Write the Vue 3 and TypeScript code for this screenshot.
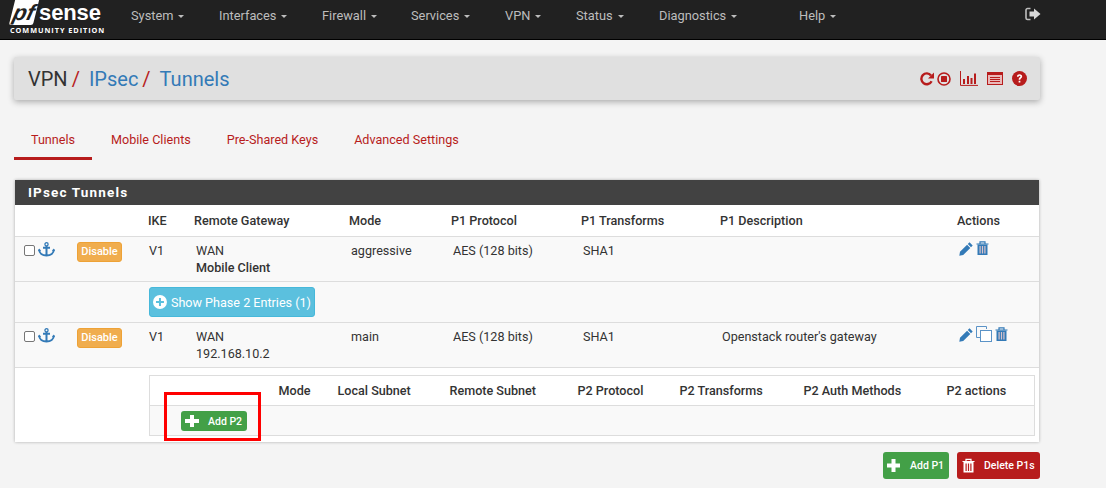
<script setup lang="ts">
const navItems: string[] = ['System', 'Interfaces', 'Firewall', 'Services', 'VPN', 'Status', 'Diagnostics', 'Help']
const tabs: string[] = ['Tunnels', 'Mobile Clients', 'Pre-Shared Keys', 'Advanced Settings']
const headers: string[] = ['', '', 'IKE', 'Remote Gateway', 'Mode', 'P1 Protocol', 'P1 Transforms', 'P1 Description', 'Actions']
const subHeaders: string[] = ['', 'Mode', 'Local Subnet', 'Remote Subnet', 'P2 Protocol', 'P2 Transforms', 'P2 Auth Methods', 'P2 actions']
</script>

<template>
  <div class="page">
    <header class="navbar">
      <div class="brand">
        <div class="logo-top"><span class="pf"><i>pf</i></span><span class="sense">sense</span></div>
        <div class="edition">COMMUNITY EDITION</div>
      </div>
      <nav class="menu">
        <span v-for="item in navItems" :key="item" class="menu-item" :class="'m-' + item.toLowerCase()">{{ item }}<b class="caret"></b></span>
      </nav>
      <svg class="logout" viewBox="0 0 16 14" width="16" height="14">
        <path d="M5.500 1.500H2.600A1.600 1.600 0 0 0 1 3.100v7.800a1.600 1.600 0 0 0 1.600 1.600h2.900" fill="none" stroke="#bdbdbd" stroke-width="1.600" />
        <path d="M9 1.500 15.500 7 9 12.500V9.500H4.500v-5H9z" fill="#d8d8d8" />
      </svg>
    </header>

    <main class="container">
      <div class="crumbs">
        <h1><span class="dark">VPN</span><em>/</em><a>IPsec</a><em>/</em><a>Tunnels</a></h1>
        <div class="crumb-icons">
          <svg width="14" height="14" viewBox="0 0 14 14"><path d="M11.600 9.200A5.400 5.400 0 1 1 11 3.400" fill="none" stroke="#b71c1c" stroke-width="2.400" /><path d="M14 .4v6H8z" fill="#b71c1c" /></svg>
          <svg width="14" height="14" viewBox="0 0 14 14"><circle cx="7" cy="7" r="6" fill="none" stroke="#b71c1c" stroke-width="1.600" /><rect x="4" y="4" width="6" height="6" rx=".6" fill="#b71c1c" /></svg>
          <svg class="ml" width="18" height="15" viewBox="0 0 18 15"><path d="M.5 0v14.400H18" fill="none" stroke="#b71c1c" /><path d="M3 8h2v5H3zM7 5h2v8H7zM10.500 7h2v6h-2zM14 2.500h2V13h-2z" fill="#b71c1c" /></svg>
          <svg class="ml" width="16" height="13" viewBox="0 0 16 13"><rect x=".5" y=".5" width="15" height="12" fill="#e9b8b8" stroke="#b71c1c" /><path d="M0 0h16v3H0zM3 5h10v1H3zM3 7h10v1H3zM3 9h10v1H3z" fill="#b71c1c" /></svg>
          <svg class="ml" width="15" height="15" viewBox="0 0 14 14"><circle cx="7" cy="7" r="7" fill="#b71c1c" /><path d="M4.600 5.300C4.700 3.900 5.700 3.100 7.100 3.100c1.400 0 2.400.9 2.400 2 0 1.700-1.800 1.700-1.800 3H6.200c0-2 1.700-2 1.700-2.900 0-.4-.3-.7-.8-.7-.5 0-.9.300-1 .9zM6.200 9h1.600v1.800H6.200z" fill="#fff" /></svg>
        </div>
      </div>

      <ul class="tabs">
        <li v-for="(tab, i) in tabs" :key="tab" :class="{ active: i === 0 }">{{ tab }}</li>
      </ul>

      <section class="panel">
        <h2>IPsec Tunnels</h2>
        <table class="main">
          <colgroup>
            <col style="width: 57px" /><col style="width: 72px" /><col style="width: 46px" /><col style="width: 155px" />
            <col style="width: 102px" /><col style="width: 130px" /><col style="width: 139px" /><col style="width: 237px" /><col />
          </colgroup>
          <thead>
            <tr><th v-for="(h, i) in headers" :key="i">{{ h }}</th></tr>
          </thead>
          <tbody>
            <tr class="row">
              <td class="first"><span class="check"></span><svg class="anchor" width="17" height="15" viewBox="0 0 17 15"><path d="M8.500 4v10M5 5.800h7M1.200 7.500c0 3.800 3.200 6 7.300 6s7.300-2.200 7.300-6" fill="none" stroke="#337ab7" stroke-width="2" /><path d="M0 9l1.200-2.500L3 9zM14 9l1.800-2.500L17 9z" fill="#337ab7" /><circle cx="8.500" cy="2.300" r="1.600" fill="none" stroke="#337ab7" stroke-width="1.300" /></svg></td>
              <td class="btn-cell"><span class="disable">Disable</span></td>
              <td class="ike">V1</td>
              <td>WAN<br /><strong>Mobile Client</strong></td>
              <td>aggressive</td>
              <td>AES (128 bits)</td>
              <td>SHA1</td>
              <td></td>
              <td class="acts">
                <svg width="14" height="14" viewBox="0 0 14 14"><path d="M10.500 0.300 13.700 3.500 12 5.200 8.800 2zM8.100 2.700 11.300 5.900 4.200 13 .3 13.700 1 9.800z" fill="#337ab7" /></svg>
                <svg class="trash" width="13" height="14" viewBox="0 0 13 14"><path d="M4 2.500V.8h5v1.700M.5 3h12" fill="none" stroke="#337ab7" stroke-width="1.200" /><path d="M1.500 3.500h10V14h-10z" fill="#337ab7" /><path d="M3.500 5h1.200v7.500H3.500zM5.900 5h1.200v7.500H5.900zM8.300 5h1.200v7.500H8.300z" fill="#d9c3cb" /></svg>
              </td>
            </tr>
            <tr class="row">
              <td colspan="2"></td>
              <td colspan="7" class="show-cell"><span class="show"><svg width="14" height="14" viewBox="0 0 14 14"><circle cx="7" cy="7" r="7" fill="#fff" /><path d="M6 3h2v3h3v2H8v3H6V8H3V6h3z" fill="#5bc0de" /></svg>Show Phase 2 Entries (1)</span></td>
            </tr>
            <tr class="row">
              <td class="first"><span class="check"></span><svg class="anchor" width="17" height="15" viewBox="0 0 17 15"><path d="M8.500 4v10M5 5.800h7M1.200 7.500c0 3.800 3.200 6 7.300 6s7.300-2.200 7.300-6" fill="none" stroke="#337ab7" stroke-width="2" /><path d="M0 9l1.200-2.500L3 9zM14 9l1.800-2.500L17 9z" fill="#337ab7" /><circle cx="8.500" cy="2.300" r="1.600" fill="none" stroke="#337ab7" stroke-width="1.300" /></svg></td>
              <td class="btn-cell"><span class="disable">Disable</span></td>
              <td class="ike">V1</td>
              <td>WAN<br />192.168.10.2</td>
              <td>main</td>
              <td>AES (128 bits)</td>
              <td>SHA1</td>
              <td>Openstack router's gateway</td>
              <td class="acts">
                <svg width="14" height="14" viewBox="0 0 14 14"><path d="M10.500 0.300 13.700 3.500 12 5.200 8.800 2zM8.100 2.700 11.300 5.900 4.200 13 .3 13.700 1 9.800z" fill="#337ab7" /></svg>
                <svg class="copy" width="16" height="16" viewBox="0 0 16 16"><path d="M10.500 3V.5h-10v11H4" fill="none" stroke="#5b93c7" /><rect x="4.500" y="4.500" width="11" height="11" fill="#fff" stroke="#5b93c7" /></svg>
                <svg class="trash" width="13" height="14" viewBox="0 0 13 14"><path d="M4 2.500V.8h5v1.700M.5 3h12" fill="none" stroke="#337ab7" stroke-width="1.200" /><path d="M1.500 3.500h10V14h-10z" fill="#337ab7" /><path d="M3.500 5h1.200v7.500H3.500zM5.900 5h1.200v7.500H5.900zM8.300 5h1.200v7.500H8.300z" fill="#d9c3cb" /></svg>
              </td>
            </tr>
            <tr class="last">
              <td colspan="2"></td>
              <td colspan="7" class="nested-cell">
                <table class="nested">
                  <colgroup>
                    <col style="width: 125px" /><col style="width: 59px" /><col style="width: 112px" /><col style="width: 128px" />
                    <col style="width: 102px" /><col style="width: 124px" /><col style="width: 143px" /><col />
                  </colgroup>
                  <thead><tr><th v-for="(h, i) in subHeaders" :key="i">{{ h }}</th></tr></thead>
                  <tbody><tr><td colspan="8"><span class="btn green small"><svg width="14" height="12" viewBox="0 0 14 12"><path d="M5 0h4v4h5v4H9v4H5V8H0V4h5z" fill="#fff" /></svg>Add P2</span></td></tr></tbody>
                </table>
              </td>
            </tr>
          </tbody>
        </table>
      </section>

      <div class="footer-btns">
        <span class="btn green"><svg width="13" height="13" viewBox="0 0 13 13"><path d="M4.500 0h4v4.500H13v4H8.500V13h-4V8.500H0v-4h4.500z" fill="#fff" /></svg>Add P1</span>
        <span class="btn red"><svg width="13" height="15" viewBox="0 0 13 14"><path d="M4 2.500V.8h5v1.700M.5 3h12" fill="none" stroke="#fff" stroke-width="1.200" /><path d="M1.500 3.500h10V14h-10z" fill="#fff" /><path d="M3.500 5h1.200v7.500H3.500zM5.900 5h1.200v7.500H5.900zM8.300 5h1.200v7.500H8.300z" fill="#b71c1c" /></svg>Delete P1s</span>
      </div>
      <div class="annotation"></div>
    </main>
  </div>
</template>

<style>
html, body { margin: 0; background: #f4f4f4; }
</style>

<style scoped>
.page { width: 1106px; height: 488px; overflow: hidden; position: relative; background: #f4f4f4; font-family: Roboto, "Liberation Sans", sans-serif; font-size: 12.6px; color: #333; }
.navbar { height: 39px; background: #212121; border-bottom: 1px solid #000; display: flex; align-items: flex-start; position: relative; }
.brand { width: 131px; flex: none; color: #fff; position: relative; height: 39px; }
.logo-top { display: flex; align-items: center; position: absolute; left: 12px; top: 0; height: 25px; }
.pf { display: block; background: #fff; transform: skewX(-14deg); width: 24px; height: 25px; color: #212121; font: italic bold 22px/25px "Liberation Sans", sans-serif; text-align: center; border-radius: 0 0 2px 2px; }
.pf i { display: block; }
.sense { font: bold 22px/24px "Liberation Sans", sans-serif; margin-left: 3px; letter-spacing: -.1px; }
.edition { position: absolute; left: 10px; top: 26px; font: bold 7.300px/9px "Open Sans", sans-serif; letter-spacing: .95px; white-space: nowrap; }
.menu { display: flex; font-size: 12.800px; color: #bdbdbd; line-height: 15px; padding-top: 8px; }
.menu-item { white-space: nowrap; }
.m-system { width: 88px; } .m-interfaces { width: 103px; } .m-firewall { width: 89px; } .m-services { width: 94px; }
.m-vpn { width: 71px; } .m-status { width: 83px; } .m-diagnostics { width: 140px; }
.caret { display: inline-block; margin-left: 5px; vertical-align: middle; border-top: 3.500px solid #bdbdbd; border-left: 3.500px solid transparent; border-right: 3.500px solid transparent; }
.logout { position: absolute; left: 1025px; top: 7px; }
.container { width: 1026px; margin-left: 14px; padding-top: 17px; }
.crumbs { height: 43px; background: #e0e0e0; border-radius: 2px; box-shadow: 0 2px 6px rgba(0, 0, 0, .3); display: flex; align-items: center; justify-content: space-between; padding: 0 13px 0 14px; }
h1 { margin: 0; font-size: 20px; font-weight: 400; line-height: 24px; }
h1 .dark { color: #333; }
h1 em { color: #b71c1c; font-style: normal; margin: 0 9px 0 4px; }
h1 a { color: #337ab7; }
.crumb-icons { display: flex; align-items: center; gap: 3px; }
.crumb-icons .ml { margin-left: 6px; }
.tabs { list-style: none; margin: 20px 0 0; padding: 0; display: flex; height: 40px; color: #b71c1c; line-height: 39px; }
.tabs li { padding: 0 18px; }
.tabs li:nth-child(2) { margin-left: 1px; }
.tabs li.active { color: #b71c1c; border-bottom: 3px solid #b71c1c; box-sizing: border-box; width: 78px; padding: 0 17px; }
.panel { margin: 20px 1px 0; height: 262px; background: #fff; box-shadow: 0 0 3px rgba(0, 0, 0, .3); }
h2 { margin: 0; height: 25px; background: #424242; color: #fff; font-size: 13.500px; font-weight: 700; line-height: 25px; padding-left: 13px; letter-spacing: 1.150px; }
table { border-collapse: collapse; table-layout: fixed; width: 100%; }
.main { width: 1024px; }
th { text-align: left; font-weight: 500; padding: 0 0 0 4px; height: 31px; white-space: nowrap; }
.row > td { background: #f9f9f9; border-top: 1px solid #ddd; height: 45px; padding: 5px 0 5px 6px; vertical-align: top; line-height: 17px; box-sizing: border-box; }
.row:nth-child(2) > td { height: 41px; }
.row > td.ike { padding-left: 5px; }
.last > td { border-top: 1px solid #ddd; }
strong { font-weight: 500; }
.row > td.first { padding-left: 9px; }
.check { display: inline-block; width: 9px; height: 9px; border: 1px solid #767676; border-radius: 2px; background: #fff; margin: 3px 3px 0 0; vertical-align: top; }
.anchor { vertical-align: top; }
.row > td.btn-cell { padding-left: 5px; }
.disable { display: block; width: 45px; text-align: center; background: #f0ad4e; color: #fff; font-size: 11px; font-weight: 500; line-height: 18px; height: 20px; border: 1px solid #eea236; border-radius: 3px; box-sizing: border-box; }
.row > td.show-cell { padding: 5px 0 0 5px; }
.show { display: flex; width: 166px; align-items: center; gap: 4px; height: 30px; box-sizing: border-box; padding: 0 3px; background: #5bc0de; border: 1px solid #46b8da; border-radius: 3px; color: #fff; font-size: 12.600px; white-space: nowrap; }
.acts svg { vertical-align: top; margin-right: 3px; }
.acts .trash { margin-top: -1px; }
.acts .copy { margin: -2px 3px 0 0; }
.nested-cell { padding: 7px 4px 0 5px; vertical-align: top; }
.nested { width: 886px; border: 1px solid #ddd; }
.nested th { height: 29px; }
.nested td { background: #f9f9f9; border-top: 1px solid #ddd; height: 30px; padding: 5px 0 0 31px; box-sizing: border-box; vertical-align: top; }
.btn { display: inline-flex; align-items: center; border-radius: 3px; color: #fff; box-sizing: border-box; height: 27px; white-space: nowrap; }
.btn.small { display: flex; height: 20px; width: 66px; padding-left: 4px; gap: 9px; font-size: 10.500px; font-weight: 500; }
.green { background: #43a047; }
.red { background: #b71c1c; }
.footer-btns { display: flex; justify-content: flex-end; gap: 8px; margin-top: 10px; }
.footer-btns .btn { font-size: 10.500px; font-weight: 500; }
.footer-btns .green { width: 66px; padding-left: 4px; gap: 10px; }
.footer-btns .red { width: 83px; padding-left: 5px; gap: 9px; }
.annotation { position: absolute; left: 164px; top: 392px; width: 97px; height: 49px; border: 3px solid #f00; box-sizing: border-box; }
</style>
